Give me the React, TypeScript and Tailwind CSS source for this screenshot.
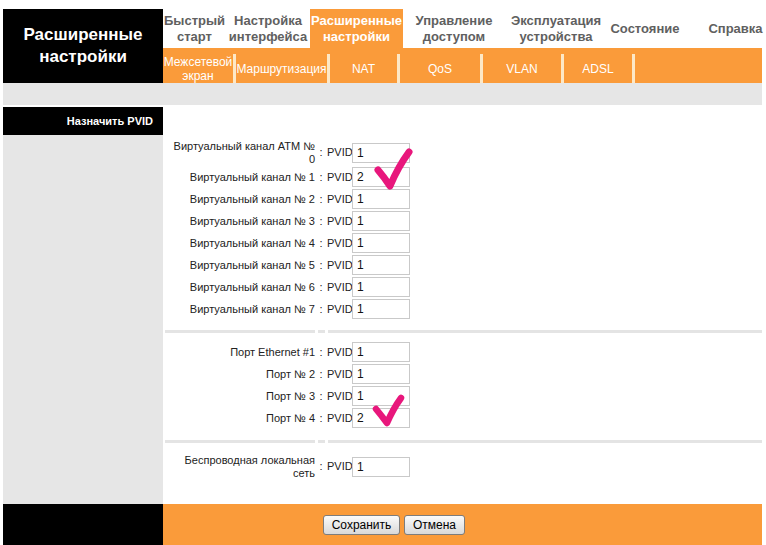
import React from "react";

const topNav: { label: React.ReactNode; w: string; active?: boolean; extra?: string }[] = [
  { label: <>Быстрый<br />старт</>, w: "w-[63px]" },
  { label: <>Настройка<br />интерфейса</>, w: "w-[84px]" },
  { label: <>Расширенные<br />настройки</>, w: "w-[93px]", active: true },
  { label: <>Управление<br />доступом</>, w: "w-[102px]" },
  { label: <>Эксплуатация<br />устройства</>, w: "w-[102px]" },
  { label: <>Состояние</>, w: "w-[76px]" },
  { label: <>Справка</>, w: "w-[83px]", extra: "pl-[22px]" },
];

const subNav: { label: React.ReactNode; w: string }[] = [
  { label: <>Межсетевой<br />экран</>, w: "w-[70px]" },
  { label: <>Маршрутизация</>, w: "w-[91px]" },
  { label: <>NAT</>, w: "w-[67px]" },
  { label: <>QoS</>, w: "w-[80px]" },
  { label: <>VLAN</>, w: "w-[78px]" },
  { label: <>ADSL</>, w: "w-[68px]" },
];

function Row({ label, value, tall }: { label: React.ReactNode; value: string; tall?: boolean }) {
  return (
    <div className={`flex items-center ${tall ? "h-[27px]" : "h-[22px]"}`}>
      <div className="w-[152px] text-right text-[11px] leading-[13px] text-[#222]">{label}</div>
      <div className="w-[12px] text-center text-[11px] text-[#222]">:</div>
      <div className="w-[25px] text-[11px] text-[#222] whitespace-nowrap">PVID</div>
      <input
        readOnly
        value={value}
        className="w-[58px] h-[20px] border border-[#c9c9c9] bg-white pl-[4px] text-[12px] text-[#111] outline-none font-['Liberation_Sans',Arial,sans-serif]"
      />
    </div>
  );
}

function Separator() {
  return (
    <div className="flex h-[3px] gap-[3px] pl-[2px]">
      <div className="w-[150px] bg-[#e4e4e4]" />
      <div className="w-[7px] bg-[#e4e4e4]" />
      <div className="flex-1 bg-[#e4e4e4]" />
    </div>
  );
}

export default function App() {
  return (
    <div className="w-[766px] h-[545px] bg-white overflow-hidden pt-[9px] pl-[3px] font-['Liberation_Sans',Arial,sans-serif]">
      {/* Header */}
      <div className="flex w-[763px] h-[74px]">
        <div className="w-[160px] h-full bg-black flex items-center justify-center text-center text-white font-bold text-[17px] leading-[22px]">
          Расширенные
          <br />
          настройки
        </div>
        <div className="w-[603px] flex flex-col">
          <div className="flex h-[39px]">
            {topNav.map((n, i) => (
              <div
                key={i}
                className={`${n.w} ${n.extra ?? ""} h-full flex items-center justify-center text-center font-bold text-[13px] leading-[16px] whitespace-nowrap ${
                  n.active ? "bg-[#fa9b3a] text-white" : "text-[#606060]"
                }`}
              >
                <span>{n.label}</span>
              </div>
            ))}
          </div>
          <div className="w-[599px] h-[35px] bg-[#fa9b3a] pt-[6px] flex">
            {subNav.map((s, i) => (
              <React.Fragment key={i}>
                <div className={`${s.w} h-full flex items-center justify-center text-center text-white text-[12px] leading-[14px] whitespace-nowrap`}>
                  <span>{s.label}</span>
                </div>
                <div className="w-[3px] h-full bg-[#fde8c6]" />
              </React.Fragment>
            ))}
            <div className="flex-1" />
          </div>
        </div>
      </div>

      {/* Grey band */}
      <div className="w-[759px] h-[22px] bg-[#e6e6e6]" />
      <div className="h-[2px]" />

      {/* Main */}
      <div className="flex w-[759px] h-[397px]">
        <div className="w-[160px] flex flex-col">
          <div className="h-[28px] bg-black text-white font-bold text-[11px] flex items-center justify-end pr-[10px]">
            Назначить PVID
          </div>
          <div className="flex-1 bg-[#e6e6e6]" />
        </div>
        <div className="relative w-[599px] bg-white">
          <div className="pt-[32px]">
            <Row tall label={<>Виртуальный канал АТМ №<br />0</>} value="1" />
            <Row label="Виртуальный канал № 1" value="2" />
            <Row label="Виртуальный канал № 2" value="1" />
            <Row label="Виртуальный канал № 3" value="1" />
            <Row label="Виртуальный канал № 4" value="1" />
            <Row label="Виртуальный канал № 5" value="1" />
            <Row label="Виртуальный канал № 6" value="1" />
            <Row label="Виртуальный канал № 7" value="1" />
          </div>
          <div className="mt-[10px]">
            <Separator />
          </div>
          <div className="pt-[8px]">
            <Row label="Порт Ethernet #1" value="1" />
            <Row label="Порт № 2" value="1" />
            <Row label="Порт № 3" value="1" />
            <Row label="Порт № 4" value="2" />
          </div>
          <div className="mt-[11px]">
            <Separator />
          </div>
          <div className="pt-[10px]">
            <Row tall label={<>Беспроводная локальная<br />сеть</>} value="1" />
          </div>

          <svg className="absolute left-0 top-0 pointer-events-none" width="599" height="397" viewBox="0 0 599 397">
            <path d="M215 63 Q221 70 227 79 Q235 60 246 45" fill="none" stroke="#e8177c" strokeWidth="7" strokeLinecap="round" strokeLinejoin="round" />
            <path d="M213 302 Q218 308 224 316 Q230 302 238 291" fill="none" stroke="#e8177c" strokeWidth="6.5" strokeLinecap="round" strokeLinejoin="round" />
          </svg>
        </div>
      </div>

      {/* Footer */}
      <div className="flex w-[759px] h-[41px]">
        <div className="w-[160px] bg-black" />
        <div className="w-[599px] bg-[#fa9b3a] flex items-center pl-[160px] gap-[4px]">
          <button className="w-[77px] h-[20px] rounded-[3px] border border-[#7d7d7d] bg-gradient-to-b from-[#fbfbfb] to-[#d9d9d9] text-[12px] text-black leading-none">
            Сохранить
          </button>
          <button className="w-[61px] h-[20px] rounded-[3px] border border-[#7d7d7d] bg-gradient-to-b from-[#fbfbfb] to-[#d9d9d9] text-[12px] text-black leading-none">
            Отмена
          </button>
        </div>
      </div>
    </div>
  );
}
